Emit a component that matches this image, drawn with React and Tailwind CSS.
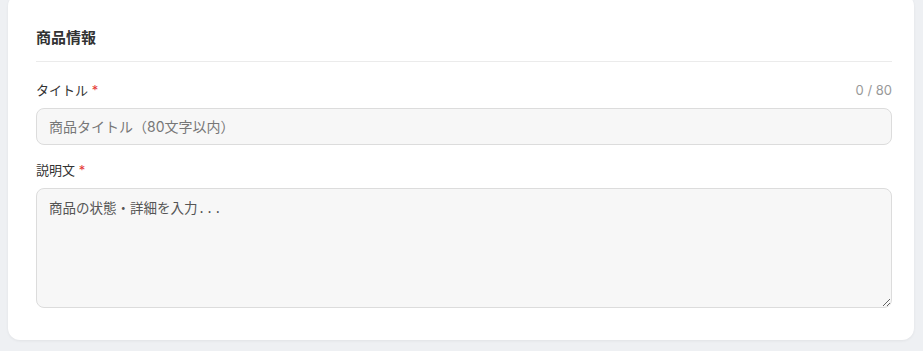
import React, { useState } from 'react';

const font = { fontFamily: '"Inter", "Noto Sans CJK JP", sans-serif' };

const App = () => {
  const [title, setTitle] = useState('');
  const [desc, setDesc] = useState('');

  return (
    <div className="min-h-screen bg-[#eef0f3] px-2 overflow-hidden" style={font}>
      <div className="w-[906px] -mt-[6px] bg-white rounded-xl shadow-[0_1px_3px_rgba(0,0,0,0.06)] pl-7 pr-[22px] pt-[33px] pb-8">
        {/* Section header */}
        <div className="pb-3 border-b border-[#ebebeb]">
          <h2 className="text-[15px] leading-[22px] font-bold text-[#333]">商品情報</h2>
        </div>

        {/* Title */}
        <div className="mt-[19px] flex items-center justify-between h-5 mb-[7px]">
          <label className="text-[13px] text-[#333]">
            タイトル <span className="text-[#e53935]">*</span>
          </label>
          <span className="text-[13px] text-[#999]">{title.length} / 80</span>
        </div>
        <input
          type="text"
          value={title}
          maxLength={80}
          onChange={(e) => setTitle(e.target.value)}
          placeholder="商品タイトル（80文字以内）"
          className="w-full h-[37px] px-3 bg-[#f7f7f7] border border-[#dcdcdc] rounded-lg text-sm text-[#333] placeholder:text-[#777] outline-none"
        />

        {/* Description */}
        <div className="mt-4 h-5 mb-[7px] flex items-center">
          <label className="text-[13px] text-[#333]">
            説明文 <span className="text-[#e53935]">*</span>
          </label>
        </div>
        <textarea
          value={desc}
          onChange={(e) => setDesc(e.target.value)}
          placeholder="商品の状態・詳細を入力..."
          className="block w-full h-[120px] px-3 py-[11px] bg-[#f7f7f7] border border-[#dcdcdc] rounded-lg font-['Liberation_Mono','Noto_Sans_CJK_JP',monospace] text-[13.5px] leading-5 text-[#333] placeholder:text-[#555] outline-none"
        />
      </div>
    </div>
  );
};

export default App;
